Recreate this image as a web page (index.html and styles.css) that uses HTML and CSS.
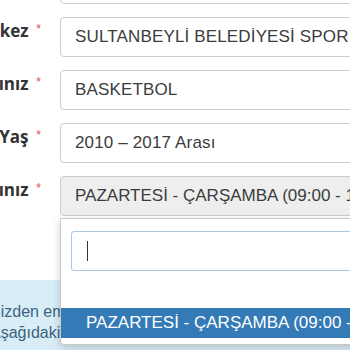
FILE: index.html
```html
<!DOCTYPE html>
<html lang="tr">
<head>
<meta charset="utf-8">
<link rel="stylesheet" href="styles.css">
</head>
<body>
<div class="page">
  <form class="form">
    <div class="row">
      <label class="label">Adı Soyadı <span class="req">*</span></label>
      <div class="field"><div class="input">AHMET YILMAZ</div></div>
    </div>
    <div class="row">
      <label class="label">Merkez <span class="req">*</span></label>
      <div class="field"><div class="input">SULTANBEYLİ BELEDİYESİ SPOR SALONU</div></div>
    </div>
    <div class="row">
      <label class="label">Branşınız <span class="req">*</span></label>
      <div class="field"><div class="input">BASKETBOL</div></div>
    </div>
    <div class="row">
      <label class="label">Yaş <span class="req">*</span></label>
      <div class="field"><div class="input">2010 – 2017 Arası</div></div>
    </div>
    <div class="row">
      <label class="label">Seansınız <span class="req">*</span></label>
      <div class="field">
        <div class="input select">PAZARTESİ - ÇARŞAMBA (09:00 - 10:00)</div>
        <div class="dropdown">
          <div class="search"><span class="caret"></span></div>
          <ul class="options">
            <li class="option active">PAZARTESİ - ÇARŞAMBA (09:00 - 10:00)</li>
          </ul>
        </div>
      </div>
    </div>
  </form>
  <div class="alert">
    <p>Sizden emin olmanızı istiyoruz.</p>
    <p>Aşağıdaki bilgileri eksiksiz doldurunuz.</p>
  </div>
</div>
</body>
</html>
```

FILE: styles.css
```css
html, body {
  margin: 0;
  padding: 0;
  background: #fff;
}
body {
  width: 350px;
  height: 350px;
  overflow: hidden;
  font-family: "Liberation Sans", Arial, sans-serif;
}
.page {
  margin-left: -110px;
  margin-top: -36px;
  width: 900px;
}
.form {
  margin: 0;
}
.row {
  display: flex;
  margin-bottom: 13px;
}
.row:last-child {
  margin-bottom: 0;
}
.label {
  box-sizing: border-box;
  width: 170px;
  flex: none;
  padding: 1px 19px 0 0;
  text-align: right;
  white-space: nowrap;
  font-family: "Open Sans", sans-serif;
  font-weight: 700;
  font-size: 17px;
  line-height: 22px;
  color: #333;
}
.req {
  color: #e05a5a;
  font-family: "Liberation Sans", Arial, sans-serif;
  font-size: 13px;
  font-weight: 400;
  vertical-align: 4px;
  margin-left: 3px;
}
.field {
  position: relative;
  flex: none;
  width: 700px;
}
.input {
  box-sizing: border-box;
  width: 100%;
  height: 40px;
  border: 1px solid #ccc;
  border-radius: 4px;
  padding: 0 14px;
  line-height: 38px;
  font-size: 17px;
  letter-spacing: 0.15px;
  color: #3c3c3c;
  white-space: nowrap;
  overflow: hidden;
  background: #fff;
}
.select {
  background: #eee;
  letter-spacing: 0;
}
.dropdown {
  position: absolute;
  top: 42px;
  left: 0;
  width: 600px;
  box-sizing: border-box;
  height: 127px;
  background: #fff;
  border: 1px solid #c8c8c8;
  border-radius: 0 0 4px 4px;
  box-shadow: 0 3px 8px rgba(0, 0, 0, 0.18);
  padding: 12px 0 0 10px;
  z-index: 5;
}
.search {
  box-sizing: border-box;
  height: 40px;
  border: 1px solid #a8c8e6;
  border-radius: 3px;
  padding: 9px 0 0 15px;
}
.caret {
  display: block;
  width: 1px;
  height: 20px;
  background: #333;
}
.options {
  list-style: none;
  margin: 37px 0 0 -10px;
  padding: 0;
}
.option {
  height: 30px;
  line-height: 30px;
  padding-left: 25px;
  font-size: 17px;
  white-space: nowrap;
}
.option.active {
  background: #337ab7;
  color: #fff;
}
.alert {
  margin-top: 64px;
  width: 900px;
  box-sizing: border-box;
  background: #d9edf7;
  color: #3b6380;
  font-size: 16px;
  line-height: 21px;
  padding: 21px 0 20px 100px;
}
.alert p {
  margin: 0;
  white-space: nowrap;
}
```
